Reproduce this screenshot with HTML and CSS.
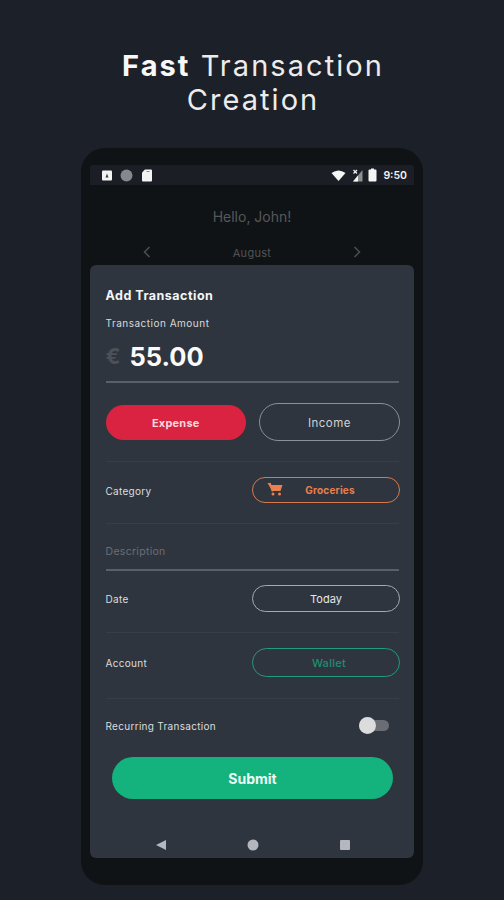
FILE: index.html
```html
<!DOCTYPE html>
<html lang="en">
<head>
    <meta charset="UTF-8">
    <meta name="viewport" content="width=device-width, initial-scale=1.0">
    <title>Fast Transaction Creation</title>
    <link rel="stylesheet" href="styles.css">
</head>
<body>

<h1 class="headline"><b>Fast</b> Transaction<br>Creation</h1>

<div class="phone">
    <div class="status-bar">
        <div class="status-group">
            <svg class="icon" width="10" height="11" viewBox="0 0 10 11"><rect x="0" y="0.5" width="10" height="10" rx="1" fill="#f4f4f4"/><path d="M3.5 7.5 L5 3.5 L6.5 7.5 Z" fill="#3a3d42"/></svg>
            <svg class="icon" width="13" height="13" viewBox="0 0 12 12"><circle cx="6" cy="6" r="5.5" fill="#85888c"/></svg>
            <svg class="icon" width="12" height="13" viewBox="0 0 11 13"><path d="M3.5 0.5 H9.5 Q10.5 0.5 10.5 1.5 V11.5 Q10.5 12.5 9.5 12.5 H1.5 Q0.5 12.5 0.5 11.5 V3.5 Z" fill="#f4f4f4"/><rect x="5" y="2" width="3" height="1" fill="#8a8a8a"/></svg>
        </div>
        <div class="status-group status-right">
            <svg class="icon" width="15" height="11" viewBox="0 0 15 11"><path d="M0.5 3 Q7.5 -2 14.5 3 L7.5 11 Z" fill="#f6f6f6"/></svg>
            <svg class="icon" width="12" height="13" viewBox="0 0 12 13"><path d="M11.5 1 V12.500 H2 Z" fill="#8c8e90"/><path d="M7 6.500 V12.500 H2 Z" fill="#f4f4f4"/><path d="M2.500 1 L6 4.500 M6 1 L2.500 4.500" stroke="#f4f4f4" stroke-width="1.200"/></svg>
            <svg class="icon" width="9" height="14" viewBox="0 0 9 14"><path d="M3 0.500 H6 V1.500 H7.500 Q8.500 1.500 8.500 2.500 V12.500 Q8.500 13.500 7.500 13.500 H1.500 Q0.500 13.500 0.500 12.500 V2.500 Q0.500 1.500 1.500 1.500 H3 Z" fill="#f6f6f6"/></svg>
            <span class="clock">9:50</span>
        </div>
    </div>

    <div class="backdrop">
        <p class="greeting">Hello, John!</p>
        <div class="month-row">
            <svg width="8" height="12" viewBox="0 0 8 12"><path d="M6.500 1 L1.500 6 L6.500 11" fill="none" stroke="#4c4f52" stroke-width="1.500"/></svg>
            <span class="month">August</span>
            <svg width="8" height="12" viewBox="0 0 8 12"><path d="M1.500 1 L6.500 6 L1.500 11" fill="none" stroke="#4c4f52" stroke-width="1.500"/></svg>
        </div>
    </div>

    <div class="sheet">
        <h2 class="sheet-title">Add Transaction</h2>
        <p class="amount-label">Transaction Amount</p>
        <div class="amount">
            <span class="currency">€</span>
            <span class="amount-value">55.00</span>
        </div>
        <div class="rule amount-rule"></div>

        <div class="type-row">
            <div class="type-btn type-expense">Expense</div>
            <div class="type-btn type-income">Income</div>
        </div>
        <div class="divider divider-type"></div>

        <div class="row row-category">
            <span class="row-label">Category</span>
            <div class="pill pill-orange">
                <svg class="cart" width="16" height="14" viewBox="0 0 16 14"><path d="M0.500 1 H3 L3.800 3 H15.500 L13.500 9 H5.200 Z" fill="#e8804f"/><path d="M3 1 L5.500 9.500" stroke="#e8804f" stroke-width="1.500"/><circle cx="6" cy="12" r="1.500" fill="#e8804f"/><circle cx="12.500" cy="12" r="1.500" fill="#e8804f"/></svg>
                Groceries
            </div>
        </div>
        <div class="divider divider-category"></div>

        <p class="description">Description</p>
        <div class="rule description-rule"></div>

        <div class="row row-date">
            <span class="row-label">Date</span>
            <div class="pill pill-white">Today</div>
        </div>
        <div class="divider divider-date"></div>

        <div class="row row-account">
            <span class="row-label">Account</span>
            <div class="pill pill-green">Wallet</div>
        </div>
        <div class="divider divider-account"></div>

        <div class="row row-recurring">
            <span class="row-label">Recurring Transaction</span>
            <div class="switch"><div class="switch-knob"></div></div>
        </div>

        <div class="submit">Submit</div>

        <div class="nav-bar">
            <svg width="12" height="12" viewBox="0 0 12 12"><path d="M11 1 V11 L1 6 Z" fill="#b4b7bd"/></svg>
            <svg width="12" height="12" viewBox="0 0 12 12"><circle cx="6" cy="6" r="5.500" fill="#b4b7bd"/></svg>
            <svg width="12" height="12" viewBox="0 0 12 12"><rect x="1" y="1" width="10" height="10" rx="1" fill="#b4b7bd"/></svg>
        </div>
    </div>
</div>

</body>
</html>
```

FILE: styles.css
```css
* {
    box-sizing: border-box;
}
body {
    margin: 0;
    height: 900px;
    overflow: hidden;
    background-color: #1c2028;
    font-family: Inter, "Noto Sans", sans-serif;
    color: #f2f2f2;
}
.headline {
    margin: 0;
    padding: 49px 0 0 2px;
    height: 148px;
    text-align: center;
    font-size: 29px;
    font-weight: 400;
    line-height: 34px;
    letter-spacing: 2.050px;
    color: #ececec;
}
.headline b {
    font-weight: 700;
    color: #f8f8f8;
}
.phone {
    width: 342px;
    height: 737px;
    margin: 0 auto;
    padding: 17px 9px 0;
    border-radius: 24px;
    background-color: #101315;
}
.status-bar {
    height: 20px;
    padding: 0 7px 0 12px;
    display: flex;
    justify-content: space-between;
    align-items: center;
    background-color: #1b1f25;
    border-radius: 3px 3px 0 0;
}
.status-group {
    display: flex;
    align-items: center;
    gap: 8px;
}
.status-right {
    gap: 5px;
}
.icon {
    display: block;
}
.clock {
    font-size: 10.500px;
    font-weight: 600;
    margin-left: 1px;
}
.backdrop {
    height: 80px;
    padding-top: 23px;
    text-align: center;
}
.greeting {
    margin: 0;
    font-size: 14px;
    line-height: 18px;
    color: #55585b;
}
.month-row {
    margin-top: 18px;
    padding: 0 53px;
    height: 16px;
    display: flex;
    justify-content: space-between;
    align-items: center;
}
.month {
    padding-top: 2px;
    font-size: 11px;
    color: #505356;
    letter-spacing: 0.3px;
}
.sheet {
    height: 593px;
    padding: 22px 14px 0 15.500px;
    background-color: #2f353e;
    border-radius: 6px;
}
.sheet-title {
    margin: 0;
    padding-top: 1px;
    height: 16px;
    font-size: 12.500px;
    font-weight: 700;
    line-height: 16px;
    letter-spacing: 0.5px;
    color: #f6f6f6;
}
.amount-label {
    margin: 12px 0 0;
    font-size: 10px;
    line-height: 16px;
    letter-spacing: 0.5px;
    color: #d8d9da;
}
.amount {
    margin-top: 7px;
    height: 36px;
    display: flex;
    align-items: center;
    gap: 9px;
}
.currency {
    font-size: 22px;
    font-weight: 700;
    color: #4c5158;
}
.amount-value {
    font-size: 25.500px;
    font-weight: 700;
    color: #fafafa;
}
.rule {
    height: 2px;
    margin-right: 1px;
    background-color: #59606a;
}
.amount-rule {
    margin-top: 7px;
}
.type-row {
    margin-top: 20px;
    height: 38px;
    display: flex;
    justify-content: space-between;
    align-items: center;
}
.type-btn {
    display: flex;
    justify-content: center;
    align-items: center;
    border-radius: 19px;
}
.type-expense {
    width: 140.500px;
    height: 35px;
    padding-top: 1px;
    background-color: #da2340;
    font-size: 11px;
    font-weight: 700;
    letter-spacing: 0.2px;
    color: #f5d9dd;
}
.type-income {
    width: 141px;
    height: 38px;
    padding-top: 2px;
    border: 1.500px solid #8a9098;
    font-size: 11.500px;
    letter-spacing: 0.5px;
    color: #cfd1d4;
}
.divider {
    height: 1px;
    margin-right: 1px;
    background-color: #383e47;
}
.divider-type {
    margin-top: 20px;
}
.row {
    display: flex;
    justify-content: space-between;
    align-items: center;
}
.row-label {
    padding-top: 1px;
    font-size: 10px;
    letter-spacing: 0.3px;
    color: #dcdddf;
}
.pill {
    width: 148px;
    height: 100%;
    position: relative;
    display: flex;
    justify-content: center;
    align-items: center;
    border-radius: 15px;
    font-size: 11px;
}
.row-category {
    margin-top: 15px;
    height: 26px;
}
.pill-orange {
    padding-left: 8px;
    border: 1.500px solid #d9784a;
    font-size: 10px;
    font-weight: 700;
    letter-spacing: 0.2px;
    color: #e8804f;
}
.cart {
    position: absolute;
    left: 14px;
    top: 4px;
}
.divider-category {
    margin-top: 20px;
}
.description {
    margin: 20px 0 0;
    font-size: 10.500px;
    line-height: 16px;
    letter-spacing: 0.3px;
    color: #686e76;
}
.description-rule {
    margin-top: 9px;
}
.row-date {
    margin-top: 14px;
    height: 27px;
}
.pill-white {
    padding-top: 1px;
    border: 1.500px solid #a6a9ad;
    color: #e6e7e8;
}
.divider-date {
    margin-top: 20px;
}
.row-account {
    margin-top: 15px;
    height: 29px;
}
.pill-green {
    padding: 1px 0 0 6px;
    border: 1.500px solid #1f9c78;
    letter-spacing: 0.3px;
    color: #1c8f6e;
    font-weight: 500;
}
.divider-account {
    margin-top: 21px;
}
.row-recurring {
    margin-top: 16px;
    height: 20px;
}
.switch {
    width: 30px;
    height: 11px;
    margin-right: 11px;
    position: relative;
    border-radius: 6px;
    background-color: #6a6e74;
}
.switch-knob {
    position: absolute;
    left: 0;
    top: -3px;
    width: 17px;
    height: 17px;
    border-radius: 50%;
    background-color: #dcdcdc;
}
.submit {
    margin: 22px 7px 0 6.500px;
    height: 42px;
    padding-top: 1px;
    display: flex;
    justify-content: center;
    align-items: center;
    border-radius: 21px;
    background-color: #14b27c;
    font-size: 14px;
    font-weight: 700;
    color: #eef8f4;
}
.nav-bar {
    margin-top: 38px;
    height: 16px;
    display: flex;
    justify-content: center;
    align-items: center;
    gap: 80px;
}
```
